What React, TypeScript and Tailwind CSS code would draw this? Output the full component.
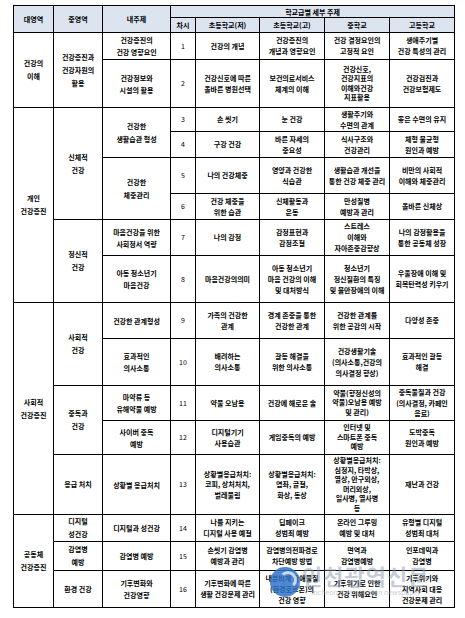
type Span = [string, number];
type Row = {
  h: number;
  big?: Span;
  mid?: Span;
  topic?: Span;
  n: number;
  c: string[];
  tight?: boolean;
};

const rows: Row[] = [
  {
    h: 27,
    big: ['건강의\n이해', 2],
    mid: ['건강증진과\n건강자원의\n활용', 2],
    topic: ['건강증진의\n건강 영향요인', 1],
    n: 1,
    c: ['건강의 개념', '건강증진의\n개념과 영향요인', '건강 결정요인의\n고정적 요인', '생애주기별\n건강 특성의 관리'],
  },
  {
    h: 48,
    topic: ['건강정보와\n시설의 활용', 1],
    n: 2,
    c: ['건강신호에 따른\n올바른 병원선택', '보건의료서비스\n체계의 이해', '건강신호,\n건강지표의\n이해와건강\n지표활용', '건강검진과\n건강보험제도'],
    tight: true,
  },
  {
    h: 24,
    big: ['개인\n건강증진', 6],
    mid: ['신체적\n건강', 4],
    topic: ['건강한\n생활습관 형성', 2],
    n: 3,
    c: ['손 씻기', '눈 건강', '생활주기와\n수면의 관계', '좋은 수면의 유지'],
  },
  {
    h: 26,
    n: 4,
    c: ['구강 건강', '바른 자세의\n중요성', '식사구조와\n건강관리', '체형 불균형\n원인과 예방'],
  },
  {
    h: 36,
    topic: ['건강한\n체중관리', 2],
    n: 5,
    c: ['나의 건강체중', '영양과 건강한\n식습관', '생활습관 개선을\n통한 건강 체중 관리', '비만의 사회적\n이해와 체중관리'],
  },
  {
    h: 26,
    n: 6,
    c: ['건강 체중을\n위한 습관', '신체활동과\n운동', '만성질병\n예방과 관리', '올바른 신체상'],
  },
  {
    h: 36,
    mid: ['정신적\n건강', 2],
    topic: ['마음건강을 위한\n사회정서 역량', 1],
    n: 7,
    c: ['나의 감정', '감정표현과\n감정조절', '스트레스\n이해와\n자아존중감향상', '나의 감정활용을\n통한 공동체 성장'],
  },
  {
    h: 47,
    topic: ['아동 청소년기\n마음건강', 1],
    n: 8,
    c: ['마음건강의의미', '아동 청소년기\n마음 건강의 이해\n및 대처방식', '청소년기\n정신질환의 특징\n및 불안장애의 이해', '우울장애 이해 및\n회복탄력성 키우기'],
  },
  {
    h: 36,
    big: ['사회적\n건강증진', 5],
    mid: ['사회적\n건강', 2],
    topic: ['건강한 관계형성', 1],
    n: 9,
    c: ['가족의 건강한\n관계', '경계 존중을 통한\n건강한 관계', '건강한 관계를\n위한 공감의 시작', '다양성 존중'],
  },
  {
    h: 47,
    topic: ['효과적인\n의사소통', 1],
    n: 10,
    c: ['배려하는\n의사소통', '갈등 해결을\n위한 의사소통', '건강생활기술\n(의사소통,건강의\n의사결정 향상)', '효과적인 갈등\n해결'],
  },
  {
    h: 35,
    mid: ['중독과\n건강', 2],
    topic: ['마약류 등\n유해약물 예방', 1],
    n: 11,
    c: ['약물 오남용', '건강에 해로운 술', '약물(향정신성의\n약물)오남용 예방\n및 관리)', '중독물질과 건강\n(의사결정, 카페인\n음료)'],
    tight: true,
  },
  {
    h: 34,
    topic: ['사이버 중독\n예방', 1],
    n: 12,
    c: ['디지털기기\n사용습관', '게임중독의 예방', '인터넷 및\n스마트폰 중독\n예방', '도박중독\n원인과 예방'],
    tight: true,
  },
  {
    h: 60,
    mid: ['응급 처치', 1],
    topic: ['상황별 응급처치', 1],
    n: 13,
    c: ['상황별응급처치:\n코피, 상처처치,\n벌레물림', '상황별응급처치:\n염좌, 골절,\n화상, 동상', '상황별응급처치:\n심정지, 타박상,\n열상, 안구외상,\n머리외상,\n일사병, 열사병\n등', '재난과 건강'],
    tight: true,
  },
  {
    h: 27,
    big: ['공동체\n건강증진', 3],
    mid: ['디지털\n성건강', 1],
    topic: ['디지털과 성건강', 1],
    n: 14,
    c: ['나를 지키는\n디지털 사용 예절', '딥페이크\n성범죄 예방', '온라인 그루밍\n예방 및 대처', '유형별 디지털\n성범죄 대처'],
  },
  {
    h: 29,
    mid: ['감염병\n예방', 1],
    topic: ['감염병 예방', 1],
    n: 15,
    c: ['손씻기 감염병\n예방과 관리', '감염병의전파경로\n차단예방 방법', '면역과\n감염병예방', '인포데믹과\n감염병'],
  },
  {
    h: 37,
    mid: ['환경 건강', 1],
    topic: ['기후변화와\n건강영향', 1],
    n: 16,
    c: ['기후변화에 따른\n생활 건강문제 관리', '내분비계 장애물질\n(환경호르몬)의\n건강 영향', '기후위기로 인한\n건강 위해요인', '기후위기와\n지역사회 대응\n건강문제 관리'],
  },
];

function Lines({ text }: { text: string }) {
  return (
    <>
      {text.split('\n').map((line, i) => (
        <div key={i} className="whitespace-nowrap">
          {line}
        </div>
      ))}
    </>
  );
}

const cell = 'border border-black text-center align-middle p-0 overflow-hidden';

export default function App() {
  return (
    <div className="relative w-[465px] h-[618px] bg-white overflow-hidden font-['Noto_Sans_CJK_KR','Noto_Sans',sans-serif] text-[7px] font-bold text-black leading-[11px]">
      <div className="pt-[5px] pl-[13px]">
        <table className="table-fixed border-collapse w-[441px]">
          <colgroup>
            <col className="w-[40px]" />
            <col className="w-[49px]" />
            <col className="w-[68px]" />
            <col className="w-[25px]" />
            <col className="w-[64px]" />
            <col className="w-[65px]" />
            <col className="w-[65px]" />
            <col className="w-[65px]" />
          </colgroup>
          <thead className="bg-[#dce4f0]">
            <tr className="h-[12px]">
              <th rowSpan={2} className={cell}>대영역</th>
              <th rowSpan={2} className={cell}>중영역</th>
              <th rowSpan={2} className={cell}>내주제</th>
              <th colSpan={5} className={`${cell} leading-[10px]`}>학교급별 세부 주제</th>
            </tr>
            <tr className="h-[15px]">
              <th className={cell}>차시</th>
              <th className={cell}>초등학교(저)</th>
              <th className={cell}>초등학교(고)</th>
              <th className={cell}>중학교</th>
              <th className={cell}>고등학교</th>
            </tr>
          </thead>
          <tbody>
            {rows.map((r) => (
              <tr key={r.n} style={{ height: r.h }}>
                {r.big && (
                  <td rowSpan={r.big[1]} className={`${cell} leading-[13px]`}>
                    <Lines text={r.big[0]} />
                  </td>
                )}
                {r.mid && (
                  <td rowSpan={r.mid[1]} className={`${cell} leading-[13px]`}>
                    <Lines text={r.mid[0]} />
                  </td>
                )}
                {r.topic && (
                  <td rowSpan={r.topic[1]} className={`${cell} ${r.topic[1] > 1 ? 'leading-[13px]' : 'leading-[12px]'}`}>
                    <Lines text={r.topic[0]} />
                  </td>
                )}
                <td className={`${cell} font-normal`}>{r.n}</td>
                {r.c.map((t, i) => (
                  <td
                    key={i}
                    className={`${cell} ${r.tight && i === 2 ? 'leading-[9.5px]' : r.tight ? 'leading-[10.5px]' : ''}`}
                  >
                    <Lines text={t} />
                  </td>
                ))}
              </tr>
            ))}
          </tbody>
        </table>
      </div>

      {/* watermark */}
      <div className="absolute left-[270px] top-[562px] flex items-start gap-[2px] pointer-events-none">
        <div className="relative w-[30px] h-[30px] mt-[5px] rounded-full bg-[#2f73c8]/85">
          <div className="absolute left-[9px] top-[4px] w-[18px] h-[18px] rounded-full border-[3px] border-white/70 border-l-transparent border-b-transparent" />
        </div>
        <div className="flex flex-col items-center">
          <div className="text-[22px] leading-[26px] font-bold text-[#8a9bb0]/50 tracking-[1px]">인천광역신문</div>
          <div className="text-[7px] leading-[8px] font-normal text-[#9aa7b6]/60">incheon metropolitan newspaper</div>
        </div>
      </div>
    </div>
  );
}
